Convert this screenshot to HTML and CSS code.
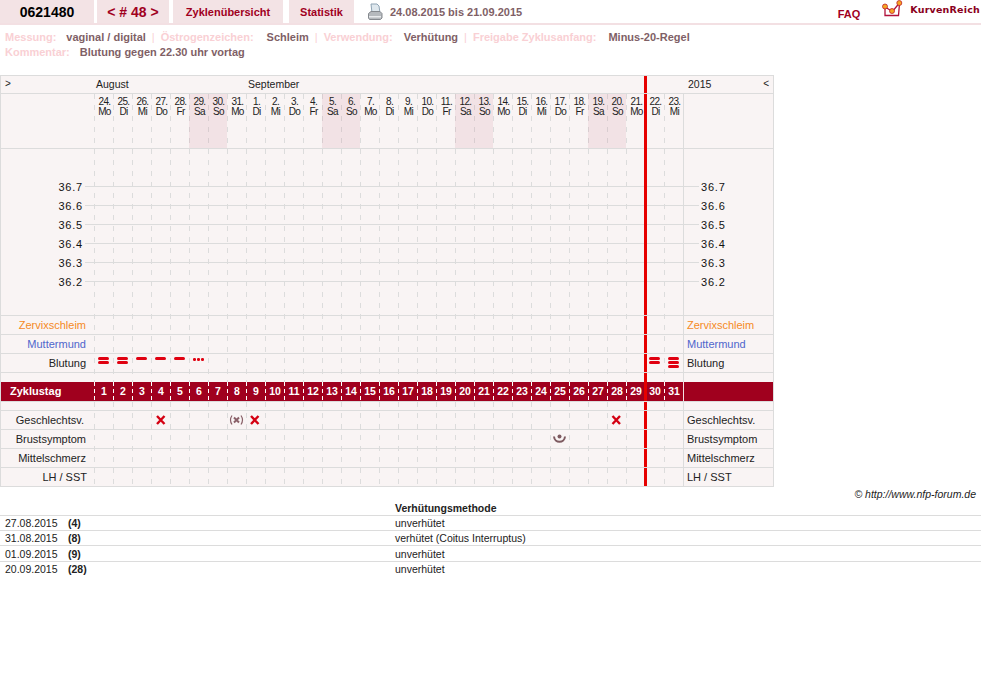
FILE: index.html
```html
<!DOCTYPE html>
<html lang="de">
<head>
<meta charset="utf-8">
<title>Zyklus 48</title>
<link rel="stylesheet" href="styles.css">
</head>
<body>
<header class="topbar">
  <div class="tab tab-id">0621480</div>
  <div class="tab tab-nav">&lt; # 48 &gt;</div>
  <a class="tab tab-link tab-overview">Zyklenübersicht</a>
  <a class="tab tab-link tab-stats">Statistik</a>
  <svg class="printer" width="16" height="18" viewBox="0 0 16 18">
    <path d="M4 1h6l2 2 1 7H5z" fill="#dfe8ee" stroke="#8fa3b3" stroke-width="1"/>
    <path d="M1.500 10.500l2.500-2h9l2 2v4.500l-1.500 1.500h-11l-1-1.500z" fill="#b5b9bd" stroke="#85898e" stroke-width="1"/>
    <rect x="2" y="13" width="12" height="1.500" fill="#e8eaec"/>
  </svg>
  <div class="range">24.08.2015 bis 21.09.2015</div>
  <a class="faq">FAQ</a>
  <svg class="logo" width="22" height="20" viewBox="0 0 22 20">
    <path d="M3 7v8.500h13.500l1-12M3 7l7.500 4.500 6.500-8" fill="none" stroke="#b0103a" stroke-width="1.300"/>
    <circle cx="3" cy="6.500" r="2.500" fill="#f5a623" stroke="#c0202a" stroke-width=".8"/>
    <circle cx="10" cy="11" r="2.500" fill="#f5a623" stroke="#c0202a" stroke-width=".8"/>
    <circle cx="17.300" cy="3" r="2.500" fill="#f5a623" stroke="#c0202a" stroke-width=".8"/>
  </svg>
  <div class="brand">KurvenReich</div>
</header>

<section class="meta">
  <div class="meta-line">
    <span class="lbl lbl-mess">Messung:</span><span class="val val-mess">vaginal / digital</span><span class="sep">|</span><span class="lbl lbl-oest">Östrogenzeichen:</span><span class="val val-oest">Schleim</span><span class="sep">|</span><span class="lbl lbl-verw">Verwendung:</span><span class="val val-verw">Verhütung</span><span class="sep">|</span><span class="lbl lbl-frei">Freigabe Zyklusanfang:</span><span class="val">Minus-20-Regel</span>
  </div>
  <div class="meta-line">
    <span class="lbl lbl-komm">Kommentar:</span><span class="val">Blutung gegen 22.30 uhr vortag</span>
  </div>
</section>

<section class="chart">
  <svg class="dashes" width="590" height="392" viewBox="0 0 590 392">
    <defs><pattern id="dash" width="19" height="11" patternUnits="userSpaceOnUse"><rect width="1" height="5" fill="#dcdcdc"/></pattern></defs>
    <rect width="590" height="392" fill="url(#dash)"/>
    <rect x="589" width="1" height="392" fill="#dcdcdc"/>
  </svg>
  <div class="today"></div>

  <div class="row row-months">
    <div class="arrow">&gt;</div>
    <div class="month month-aug">August</div>
    <div class="month month-sep">September</div>
    <div class="year">2015</div>
    <div class="arrow arrow-r">&lt;</div>
  </div>

  <div class="row row-days">
    <div class="side"></div>
    <div class="day">24.<br>Mo</div><div class="day">25.<br>Di</div><div class="day">26.<br>Mi</div><div class="day">27.<br>Do</div><div class="day">28.<br>Fr</div><div class="day we">29.<br>Sa</div><div class="day we">30.<br>So</div><div class="day">31.<br>Mo</div>
    <div class="day">1.<br>Di</div><div class="day">2.<br>Mi</div><div class="day">3.<br>Do</div><div class="day">4.<br>Fr</div><div class="day we">5.<br>Sa</div><div class="day we">6.<br>So</div><div class="day">7.<br>Mo</div><div class="day">8.<br>Di</div><div class="day">9.<br>Mi</div><div class="day">10.<br>Do</div><div class="day">11.<br>Fr</div><div class="day we">12.<br>Sa</div><div class="day we">13.<br>So</div><div class="day">14.<br>Mo</div><div class="day">15.<br>Di</div><div class="day">16.<br>Mi</div><div class="day">17.<br>Do</div><div class="day">18.<br>Fr</div><div class="day we">19.<br>Sa</div><div class="day we">20.<br>So</div><div class="day">21.<br>Mo</div><div class="day">22.<br>Di</div><div class="day">23.<br>Mi</div>
  </div>

  <div class="temps">
    <div class="temp"><span class="t-val t-left">36.7</span><i class="t-line"></i><span class="t-val t-right">36.7</span></div>
    <div class="temp"><span class="t-val t-left">36.6</span><i class="t-line"></i><span class="t-val t-right">36.6</span></div>
    <div class="temp"><span class="t-val t-left">36.5</span><i class="t-line"></i><span class="t-val t-right">36.5</span></div>
    <div class="temp"><span class="t-val t-left">36.4</span><i class="t-line"></i><span class="t-val t-right">36.4</span></div>
    <div class="temp"><span class="t-val t-left">36.3</span><i class="t-line"></i><span class="t-val t-right">36.3</span></div>
    <div class="temp"><span class="t-val t-left">36.2</span><i class="t-line"></i><span class="t-val t-right">36.2</span></div>
  </div>

  <div class="row row-obs row-low">
    <div class="lab lab-orange">Zervixschleim</div><div class="lab-r lab-orange">Zervixschleim</div>
  </div>
  <div class="row row-obs row-low">
    <div class="lab lab-blue">Muttermund</div><div class="lab-r lab-blue">Muttermund</div>
  </div>
  <div class="row row-obs row-low">
    <div class="lab">Blutung</div>
    <div class="mark d1"><i class="bar"></i><i class="bar"></i></div>
    <div class="mark d2"><i class="bar"></i><i class="bar"></i></div>
    <div class="mark d3"><i class="bar"></i></div>
    <div class="mark d4"><i class="bar"></i></div>
    <div class="mark d5"><i class="bar"></i></div>
    <div class="mark dots d6"><i class="dot"></i><i class="dot"></i><i class="dot"></i></div>
    <div class="mark tight d30"><i class="bar"></i><i class="bar"></i></div>
    <div class="mark tight d31"><i class="bar"></i><i class="bar"></i><i class="bar"></i></div>
    <div class="lab-r">Blutung</div>
  </div>
  <div class="row row-gap row-low"></div>

  <div class="row band">
    <div class="band-title">Zyklustag</div>
    <div class="num">1</div><div class="num">2</div><div class="num">3</div><div class="num">4</div><div class="num">5</div><div class="num">6</div><div class="num">7</div><div class="num">8</div><div class="num">9</div><div class="num">10</div><div class="num">11</div><div class="num">12</div><div class="num">13</div><div class="num">14</div><div class="num">15</div><div class="num">16</div><div class="num">17</div><div class="num">18</div><div class="num">19</div><div class="num">20</div><div class="num">21</div><div class="num">22</div><div class="num">23</div><div class="num">24</div><div class="num">25</div><div class="num">26</div><div class="num">27</div><div class="num">28</div><div class="num">29</div><div class="num">30</div><div class="num">31</div>
    <div class="band-end"></div>
    <div class="band-today"></div>
  </div>

  <div class="row row-gap2 row-low"></div>
  <div class="row row-obs row-low">
    <div class="lab lab-g">Geschlechtsv.</div>
    <svg class="ico d4" width="19" height="18" viewBox="0 0 19 18"><path d="M6 5l7.500 8M13.500 5L6 13" stroke="#d40012" stroke-width="2.400" fill="none"/></svg>
    <svg class="ico d8" width="19" height="18" viewBox="0 0 19 18"><path d="M5 4.500q-3 4.500 0 9M14 4.500q3 4.500 0 9" stroke="#8a6068" stroke-width="1.200" fill="none"/><path d="M7 6.500l5 5M12 6.500l-5 5" stroke="#8a6068" stroke-width="2" fill="none"/></svg>
    <svg class="ico d9" width="19" height="18" viewBox="0 0 19 18"><path d="M5 5l7.500 8M12.500 5L5 13" stroke="#d40012" stroke-width="2.400" fill="none"/></svg>
    <svg class="ico d28" width="19" height="18" viewBox="0 0 19 18"><path d="M5.500 5l7.500 8M13 5L5.500 13" stroke="#d40012" stroke-width="2.400" fill="none"/></svg>
    <div class="lab-r">Geschlechtsv.</div>
  </div>
  <div class="row row-obs row-low">
    <div class="lab">Brustsymptom</div>
    <svg class="ico d25" width="19" height="18" viewBox="0 0 19 18"><circle cx="9.500" cy="6.500" r="2" fill="#7d5a60"/><path d="M4 6.500c.5 7 10.500 7 11 0" stroke="#7d5a60" stroke-width="2" fill="none"/></svg>
    <div class="lab-r">Brustsymptom</div>
  </div>
  <div class="row row-obs row-low">
    <div class="lab">Mittelschmerz</div><div class="lab-r">Mittelschmerz</div>
  </div>
  <div class="row row-obs row-low row-last">
    <div class="lab lab-lh">LH / SST</div><div class="lab-r">LH / SST</div>
  </div>
</section>

<div class="credit">© http://www.nfp-forum.de</div>

<section class="methods">
  <div class="m-row m-head"><span></span><span></span><b>Verhütungsmethode</b></div>
  <div class="m-row"><span>27.08.2015</span><b>(4)</b><span>unverhütet</span></div>
  <div class="m-row"><span>31.08.2015</span><b>(8)</b><span>verhütet (Coitus Interruptus)</span></div>
  <div class="m-row m-tall"><span>01.09.2015</span><b>(9)</b><span>unverhütet</span></div>
  <div class="m-row m-end"><span>20.09.2015</span><b>(28)</b><span>unverhütet</span></div>
</section>
</body>
</html>
```
FILE: styles.css
```css
html, body { margin: 0; padding: 0; background: #fff; }
body { font-family: "Liberation Sans", Arial, sans-serif; font-size: 11px; color: #222; width: 981px; overflow-x: hidden; }

.topbar { display: flex; align-items: flex-start; height: 23px; border-bottom: 2px solid #f3e0e3; }
.tab { height: 23px; background: #f3e3e5; display: flex; align-items: center; justify-content: center; box-sizing: border-box; }
.tab-id { width: 94px; font-size: 14px; font-weight: bold; color: #000; padding-left: 0; }
.tab-nav { width: 72px; margin-left: 3px; font-size: 14px; font-weight: bold; color: #a0001e; word-spacing: 0; }
.tab-link { font-size: 11px; font-weight: bold; color: #a0001e; }
.tab-overview { width: 110px; margin-left: 4px; }
.tab-stats { width: 65px; margin-left: 6px; }
.printer { margin: 3px 0 0 13px; }
.range { margin: 6px 0 0 7px; font-weight: bold; font-size: 11px; color: #7f5f66; }
.faq { margin: 8px 0 0 auto; font-weight: bold; font-size: 11px; color: #a0001e; }
.logo { margin: 0 0 0 22px; }
.brand { margin: 4px 1px 0 6px; font-family: "DejaVu Sans", sans-serif; font-weight: bold; font-size: 9.500px; letter-spacing: .2px; color: #8a0020; }

.meta { padding: 5px 0 0 5px; height: 50px; box-sizing: border-box; font-size: 11px; font-weight: bold; line-height: 15px; color: #7f5f66; }
.meta-line { white-space: nowrap; height: 15px; }
.lbl { color: #f9d0d4; }
.sep { color: #f9d0d4; font-weight: normal; margin: 0 6px; }
.lbl-mess { margin-right: 10px; }
.lbl-oest { margin-right: 13px; }
.lbl-verw { margin-right: 11px; }
.lbl-frei { margin-right: 12px; }
.lbl-komm { margin-right: 10px; }

.chart { position: relative; width: 774px; box-sizing: border-box; background: #f9f4f4; border-left: 1px solid #dcdcdc; border-right: 1px solid #dcdcdc; }
.dashes { position: absolute; left: 93px; top: 19px; }
.today { position: absolute; left: 643px; top: 0; width: 3px; height: 411px; background: #e60000; }

.row { position: relative; display: grid; grid-template-columns: 93px repeat(31, 19px) 90px; box-sizing: border-box; border-top: 1px solid #dcdcdc; }
.row-low { z-index: 2; }
.row-months { height: 18px; line-height: 17px; }
.arrow { grid-column: 1; padding: 0 0 0 4px; font-size: 10px; line-height: 15px; }
.arrow-r { position: absolute; right: 4px; top: 0; }
.month { white-space: nowrap; font-size: 10.500px; padding-left: 2px; }
.month-aug { grid-column: 2; }
.month-sep { grid-column: 10; }
.year { grid-column: 33; padding-left: 5px; font-size: 10.500px; }

.row-days { height: 55px; }
.day { font-size: 10px; line-height: 10px; text-align: center; letter-spacing: -.6px; padding: 3px 0 0 2px; color: #222; }
.we { background: rgba(200, 110, 130, .13); }

.temps { height: 167px; box-sizing: border-box; border-top: 1px solid #dcdcdc; padding-top: 28px; }
.temp { display: flex; align-items: center; height: 19px; }
.t-val { letter-spacing: .8px; font-size: 11px; color: #111; }
.t-left { width: 82px; text-align: right; }
.t-right { width: 72px; padding-left: 2px; }
.t-line { flex: 1; height: 1px; margin-left: 2px; background: #dcdcdc; }

.row-obs { height: 19px; line-height: 18px; }
.row-gap { height: 10px; }
.row-gap2 { height: 9px; }
.row-last { height: 20px; border-bottom: 1px solid #dcdcdc; }
.lab { grid-column: 1; grid-row: 1; text-align: right; padding-right: 8px; white-space: nowrap; }
.lab-r { grid-column: 33; grid-row: 1; padding-left: 4px; white-space: nowrap; }
.lab-orange { color: #f58a1f; }
.lab-blue { color: #4f66cc; }
.lab-g { padding-right: 10px; }
.lab-lh { padding-right: 7px; }

.mark { grid-row: 1; display: flex; flex-direction: column; align-items: center; gap: 1px; padding: 3px 0 0 0; }
.tight { padding-top: 3px; }
.bar { display: block; width: 11px; height: 3px; background: #e00010; border-radius: 2px; }
.dots { flex-direction: row; justify-content: center; gap: 1.500px; padding-top: 4px; align-items: flex-start; }
.dot { display: block; width: 2.500px; height: 2.500px; border-radius: 50%; background: #e00010; }
.ico { grid-row: 1; display: block; }

.d1 { grid-column: 2; } .d2 { grid-column: 3; } .d3 { grid-column: 4; } .d4 { grid-column: 5; }
.d5 { grid-column: 6; } .d6 { grid-column: 7; } .d8 { grid-column: 9; } .d9 { grid-column: 10; }
.d25 { grid-column: 26; } .d28 { grid-column: 29; } .d30 { grid-column: 31; } .d31 { grid-column: 32; }

.band { height: 19px; border-top: 0; background: #a0001e; z-index: 2; margin-left: 0; }
.band-title { color: #fff; font-weight: bold; padding-left: 9px; line-height: 19px; }
.num { color: #fff; font-weight: bold; font-size: 10.500px; line-height: 19px; text-align: center; padding-left: 1px; background: repeating-linear-gradient(to bottom, #fff 0 4px, transparent 4px 7px) left top / 1px 100% no-repeat; }
.band-end { border-left: 1px solid #f3e0e3; }
.band-today { position: absolute; left: 643px; top: 0; width: 3px; height: 100%; background: #e60000; }

.credit { text-align: right; font-style: italic; font-size: 10.500px; padding-right: 5px; height: 14px; line-height: 15px; color: #222; }

.methods { font-size: 10.500px; color: #222; }
.m-row { display: grid; grid-template-columns: 63px 327px 1fr; padding-left: 5px; height: 15px; box-sizing: border-box; line-height: 15px; border-bottom: 1px solid #dcdcdc; }
.m-head { height: 15px; }
.m-tall { height: 16px; line-height: 16px; }
.m-end { border-bottom: 0; }
```
